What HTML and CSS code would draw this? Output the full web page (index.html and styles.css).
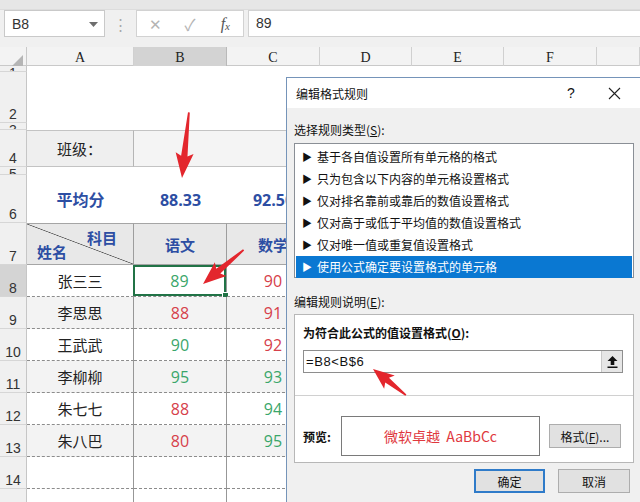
FILE: index.html
```html
<!DOCTYPE html>
<html lang="zh">
<head>
<meta charset="utf-8">
<title>编辑格式规则</title>
<link rel="stylesheet" href="styles.css">
</head>
<body>
<div class="app">
  <div class="topstrip"></div>
  <div class="fbar">
    <div class="namebox"><span>B8</span><svg class="caret" width="9" height="5" viewBox="0 0 9 5"><path d="M0 0H9L4.5 5Z" fill="#6e6e6e"/></svg></div>
    <div class="grip">⋮</div>
    <div class="fbtns">
      <span class="fb-x">✕</span>
      <span class="fb-ok">✓</span>
      <span class="fb-fx">f<sub>x</sub></span>
    </div>
    <div class="finput">89</div>
  </div>

  <div class="sheet">
    <div class="row colhdr">
      <div class="corner"><svg width="12" height="12" viewBox="0 0 12 12"><path d="M12 0V12H0Z" fill="#b5b5b5"/></svg></div>
      <div class="ch">A</div>
      <div class="ch sel">B</div>
      <div class="ch">C</div>
      <div class="ch">D</div>
      <div class="ch">E</div>
      <div class="ch">F</div>
      <div class="ch"></div>
    </div>

    <div class="row r1"><div class="rh">1</div><div class="blank span7"></div></div>
    <div class="row r2"><div class="rh">2</div><div class="blank span7"></div></div>
    <div class="row r3"><div class="rh">3</div><div class="blank span7"></div></div>
    <div class="row r4">
      <div class="rh">4</div>
      <div class="c c-class">班级：</div>
      <div class="c c-classv"></div>
    </div>
    <div class="row r5"><div class="rh">5</div><div class="blank span7"></div></div>
    <div class="row r6">
      <div class="rh">6</div>
      <div class="c avg">平均分</div>
      <div class="c avg num">88.33</div>
      <div class="c avg num">92.50</div>
      <div class="blank span4"></div>
    </div>
    <div class="row r7">
      <div class="rh">7</div>
      <div class="c th diag"><span class="d-top">科目</span><span class="d-bot">姓名</span></div>
      <div class="c th">语文</div>
      <div class="c th">数学</div>
      <div class="blank span4"></div>
    </div>
    <div class="row rd">
      <div class="rh cur">8</div>
      <div class="c name">张三三</div>
      <div class="c v g active">89</div>
      <div class="c v r">90</div>
      <div class="blank span4"></div>
    </div>
    <div class="row rd alt">
      <div class="rh">9</div>
      <div class="c name">李思思</div>
      <div class="c v r">88</div>
      <div class="c v r">91</div>
      <div class="blank span4"></div>
    </div>
    <div class="row rd">
      <div class="rh">10</div>
      <div class="c name">王武武</div>
      <div class="c v g">90</div>
      <div class="c v r">92</div>
      <div class="blank span4"></div>
    </div>
    <div class="row rd alt">
      <div class="rh">11</div>
      <div class="c name">李柳柳</div>
      <div class="c v g">95</div>
      <div class="c v g">93</div>
      <div class="blank span4"></div>
    </div>
    <div class="row rd">
      <div class="rh">12</div>
      <div class="c name">朱七七</div>
      <div class="c v r">88</div>
      <div class="c v g">94</div>
      <div class="blank span4"></div>
    </div>
    <div class="row rd alt">
      <div class="rh">13</div>
      <div class="c name">朱八巴</div>
      <div class="c v r">80</div>
      <div class="c v g">95</div>
      <div class="blank span4"></div>
    </div>
    <div class="row rd">
      <div class="rh">14</div>
      <div class="c name"></div>
      <div class="c v"></div>
      <div class="c v"></div>
      <div class="blank span4"></div>
    </div>
    <div class="row rd">
      <div class="rh">15</div>
      <div class="c name"></div>
      <div class="c v"></div>
      <div class="c v"></div>
      <div class="blank span4"></div>
    </div>
  </div>

  <div class="dialog">
    <div class="dlg-title">
      <span class="dlg-name">编辑格式规则</span>
      <span class="dlg-help">?</span>
      <svg class="dlg-close" width="13" height="13" viewBox="0 0 13 13"><path d="M1 1L12 12M12 1L1 12" stroke="#222" stroke-width="1.1"/></svg>
    </div>
    <div class="dlg-body">
      <div class="lbl">选择规则类型(<u>S</u>):</div>
      <div class="rulelist">
        <div class="item"><span class="tri">▶</span>基于各自值设置所有单元格的格式</div>
        <div class="item"><span class="tri">▶</span>只为包含以下内容的单元格设置格式</div>
        <div class="item"><span class="tri">▶</span>仅对排名靠前或靠后的数值设置格式</div>
        <div class="item"><span class="tri">▶</span>仅对高于或低于平均值的数值设置格式</div>
        <div class="item"><span class="tri">▶</span>仅对唯一值或重复值设置格式</div>
        <div class="item selected"><span class="tri">▶</span>使用公式确定要设置格式的单元格</div>
      </div>
      <div class="lbl lbl2">编辑规则说明(<u>E</u>):</div>
      <div class="group">
        <div class="g-top">
          <div class="blbl">为符合此公式的值设置格式(<u>O</u>):</div>
          <div class="formula">
            <span class="ftext">=B8&lt;B$6</span>
            <span class="fbtn"><svg width="11" height="12" viewBox="0 0 11 12"><path d="M5.5 0L10.5 5H7.3V9H3.7V5H0.5Z" fill="#111"/><rect x="0.5" y="10.5" width="10" height="1.5" fill="#111"/></svg></span>
          </div>
        </div>
        <div class="g-bot">
          <span class="plbl">预览:</span>
          <div class="preview">微软卓越&nbsp; AaBbCc</div>
          <div class="btn fmt">格式(<u>F</u>)...</div>
        </div>
      </div>
      <div class="actions">
        <div class="btn okbtn">确定</div>
        <div class="btn">取消</div>
      </div>
    </div>
  </div>

  <svg class="arrows" width="640" height="502" viewBox="0 0 640 502">
    <g fill="#e3262d">
      <polygon points="0,0 -25,-9 -22,-3.2 -66,-0.9 -66,0.9 -22,3.2 -25,9" transform="translate(182,178) rotate(96)"/>
      <polygon points="0,0 -23,-9 -20,-3.2 -53,-0.9 -53,0.9 -20,3.2 -23,9" transform="translate(203,284) rotate(140)"/>
      <polygon points="0,0 -21,-8.5 -18,-3 -42,-0.9 -42,0.9 -18,3 -21,8.5" transform="translate(373,369) rotate(218.5)"/>
    </g>
  </svg>
</div>
</body>
</html>
```

FILE: styles.css
```css
* { box-sizing: border-box; }
html, body { margin: 0; padding: 0; }
body {
  width: 640px;
  height: 502px;
  overflow: hidden;
  background: #ffffff;
  font-family: "Noto Sans CJK SC", "Noto Sans", sans-serif;
}
.app {
  position: relative;
  width: 640px;
  height: 502px;
  overflow: hidden;
}

/* ---------- top / formula bar ---------- */
.topstrip {
  height: 10px;
  background: #e6e6e6;
  border-bottom: 1px solid #dcdcdc;
}
.fbar {
  height: 37px;
  background: #f0f0f0;
  display: flex;
  align-items: flex-start;
}
.namebox {
  margin-left: 4px;
  width: 101px;
  height: 27px;
  background: #fff;
  border: 1px solid #c9c9c9;
  display: flex;
  align-items: center;
  justify-content: space-between;
  padding: 0 6px 0 7px;
  font-family: "Liberation Sans", sans-serif;
  font-size: 14px;
  color: #333;
}
.caret { margin-top: 1px; }
.grip {
  width: 31px;
  text-align: center;
  color: #a9a9a9;
  font-size: 15px;
  line-height: 27px;
}
.fbtns {
  width: 108px;
  height: 27px;
  background: #fff;
  border: 1px solid #d2d2d2;
  display: flex;
  align-items: center;
  color: #b4b4b4;
}
.fb-x { width: 36px; text-align: center; font-size: 15px; padding-left: 1px; }
.fb-ok { width: 36px; text-align: center; font-size: 16px; }
.fb-fx {
  width: 36px;
  text-align: center;
  font-family: "Liberation Serif", serif;
  font-style: italic;
  font-size: 16px;
  color: #555;
}
.fb-fx sub { font-size: 11px; vertical-align: -1px; }
.finput {
  margin-left: 4px;
  flex: 1;
  height: 27px;
  background: #fff;
  border: 1px solid #d2d2d2;
  border-right: none;
  padding-left: 7px;
  font-family: "Liberation Sans", sans-serif;
  font-size: 14px;
  line-height: 25px;
  color: #333;
}

/* ---------- sheet ---------- */
.sheet { display: flex; flex-direction: column; }
.row {
  display: grid;
  grid-template-columns: 27px 107px 93px 93px 92px 92px 93px 43px;
}
.colhdr {
  height: 19px;
  background: #f3f3f3;
  border-bottom: 1px solid #c9c9c9;
}
.corner {
  border-right: 1px solid #c9c9c9;
  display: flex;
  align-items: flex-end;
  justify-content: flex-end;
  padding: 0 3px 2px 0;
}
.ch {
  border-right: 1px solid #d0d0d0;
  text-align: center;
  font-family: "Liberation Serif", serif;
  font-size: 14px;
  line-height: 19px;
  color: #222;
  padding-top: 1px;
}
.ch.sel {
  background: #d3d3d3;
  border-bottom: 2px solid #217346;
  border-right-color: #b9b9b9;
}

.rh {
  background: #f0f0f0;
  border-right: 1px solid #c6c6c6;
  border-bottom: 1px solid #d6d6d6;
  font-family: "Liberation Sans", sans-serif;
  font-size: 14px;
  color: #333;
  display: flex;
  align-items: flex-end;
  justify-content: center;
  line-height: 14px;
  padding-bottom: 1px;
  overflow: hidden;
}
.rh.cur { background: #d4d4d4; }
.blank { background: #fff; }
.span7 { grid-column: span 7; }
.span4 { grid-column: span 4; }

.r1 { height: 6px; }
.r1 .rh { align-items: flex-start; padding-top: 0; }
.r2 { height: 51px; }
.r3 { height: 7px; }
.r3 .rh, .r5 .rh { align-items: flex-start; }
.r4 { height: 37px; }
.r5 { height: 8px; }
.r6 { height: 48px; }
.r7 { height: 42px; }
.rd { height: 32px; }

.c {
  display: flex;
  align-items: center;
  justify-content: center;
  font-size: 15px;
  color: #222;
  position: relative;
}
.c-class {
  background: #efefef;
  border-top: 1px solid #c3c3c3;
  border-bottom: 1px solid #c3c3c3;
  border-right: 1px solid #b5b5b5;
  justify-content: flex-start;
  padding-left: 30px;
}
.c-classv {
  grid-column: span 6;
  background: #f4f4f4;
  border-top: 1px solid #c3c3c3;
  border-bottom: 1px solid #c3c3c3;
}
.avg {
  color: #2d4ea3;
  font-weight: bold;
  font-size: 16px;
}
.num { font-family: "Open Sans", "Noto Sans CJK SC", sans-serif; font-size: 16px; padding-top: 1px; }
.th {
  background: #e8e8e8;
  border-top: 1px solid #a5a5a5;
  border-right: 1px solid #9d9d9d;
  border-bottom: 1px solid #a5a5a5;
  color: #2d4ea3;
  font-weight: bold;
  font-size: 15px;
}
.diag {
  background: #e8e8e8 linear-gradient(to top right, transparent calc(50% - 0.7px), #555 50%, transparent calc(50% + 0.7px));
  display: block;
}
.d-top { position: absolute; right: 16px; top: 3px; }
.d-bot { position: absolute; left: 10px; bottom: 2px; }

.name {
  border-right: 1px solid #979797;
  border-bottom: 1px dashed #8c8c8c;
}
.v {
  border-right: 1px solid #979797;
  border-bottom: 1px dashed #8c8c8c;
  font-family: "Open Sans", "Noto Sans CJK SC", sans-serif;
  font-size: 16px;
}
.alt .name, .alt .v { background: #f3f3f3; }
.g { color: #3aa66a; }
.r { color: #d6404a; }
.active {
  box-shadow: inset 0 0 0 2px #217346;
  margin-left: -1px;
}
.active::after {
  content: "";
  position: absolute;
  right: -3px;
  bottom: -3px;
  width: 5px;
  height: 5px;
  background: #217346;
  border: 1px solid #fff;
}

/* ---------- dialog ---------- */
.dialog {
  position: absolute;
  left: 286px;
  top: 77px;
  width: 358px;
  height: 430px;
  border: 1px solid #7594b9;
  background: #f0f0f0;
  z-index: 5;
}
.dlg-title {
  height: 30px;
  background: #fff;
  display: flex;
  align-items: center;
  font-size: 12px;
  color: #111;
}
.dlg-name { padding-left: 9px; flex: 1; }
.dlg-help { width: 14px; font-family: "Liberation Sans", sans-serif; font-size: 14px; margin-right: 27px; }
.dlg-close { margin-right: 22px; }
.dlg-body { padding-left: 7px; }
.lbl {
  font-size: 12px;
  line-height: 16px;
  color: #111;
  margin-top: 14px;
}
.lbl u, .blbl u, .fmt u { text-underline-offset: 1px; }
.rulelist {
  margin-top: 5px;
  width: 340px;
  height: 135px;
  background: #fff;
  border: 1px solid #8a8f96;
  padding: 2px 1px;
}
.item {
  height: 22px;
  line-height: 22px;
  font-size: 12px;
  color: #111;
  padding-left: 6px;
  white-space: nowrap;
}
.tri { font-size: 10px; margin-right: 5px; position: relative; top: -1px; }
.item.selected { background: #0a78d2; color: #fff; }
.lbl2 { margin-top: 16px; }
.group {
  margin-top: 4px;
  width: 340px;
  height: 149px;
  background: #fff;
  border: 1px solid #b7b7b7;
}
.g-top {
  height: 81px;
  border-bottom: 1px solid #d0d0d0;
  padding: 10px 0 0 8px;
}
.blbl {
  font-size: 12px;
  font-weight: bold;
  line-height: 16px;
  color: #111;
}
.formula {
  margin-top: 9px;
  width: 320px;
  height: 23px;
  border: 1px solid #8e8e8e;
  display: flex;
  align-items: center;
  justify-content: space-between;
  padding-left: 2px;
}
.ftext {
  font-family: "Liberation Sans", sans-serif;
  font-size: 13px;
  letter-spacing: 0.6px;
  color: #111;
}
.fbtn {
  width: 21px;
  height: 21px;
  background: #e6e6e6;
  border-left: 1px solid #c8c8c8;
  display: flex;
  align-items: center;
  justify-content: center;
}
.g-bot {
  height: 66px;
  display: flex;
  align-items: center;
  padding: 14px 0 0 8px;
}
.plbl { font-size: 12px; font-weight: bold; color: #111; width: 38px; }
.preview {
  width: 199px;
  height: 40px;
  border: 1px solid #7a7a7a;
  display: flex;
  align-items: center;
  justify-content: center;
  color: #e0383e;
  font-size: 14px;
}
.btn {
  height: 24px;
  width: 72px;
  background: #e1e1e1;
  border: 1px solid #adadad;
  font-size: 12px;
  color: #111;
  display: flex;
  align-items: center;
  justify-content: center;
}
.fmt { margin-left: 9px; }
.actions {
  margin-top: 6px;
  width: 342px;
  display: flex;
  justify-content: flex-end;
  gap: 13px;
  padding-right: 6px;
}
.okbtn { width: 71px; border: 2px solid #2f7bc9; }

/* ---------- arrows ---------- */
.arrows {
  position: absolute;
  left: 0;
  top: 0;
  z-index: 10;
  pointer-events: none;
}
```
